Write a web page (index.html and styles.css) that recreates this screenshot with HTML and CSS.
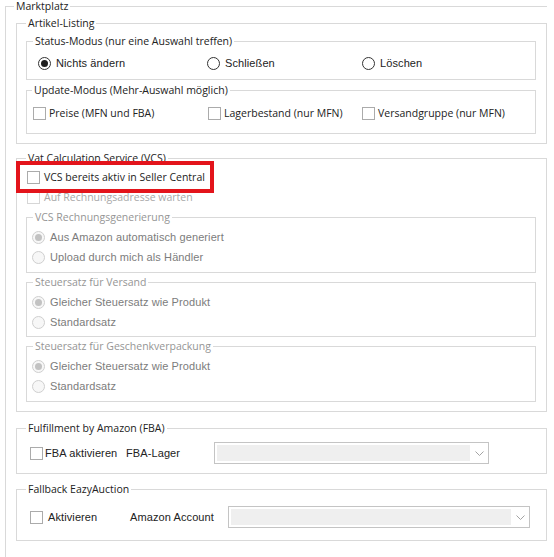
FILE: index.html
```html
<!DOCTYPE html>
<html lang="de">
<head>
<meta charset="utf-8">
<title>Marktplatz</title>
<link rel="stylesheet" href="styles.css">
</head>
<body>
<div class="page">
  <fieldset class="fs outer">
    <legend class="lg lg-outer">Marktplatz</legend>

    <fieldset class="fs group artikel">
      <legend class="lg lg-group">Artikel-Listing</legend>

      <fieldset class="fs sub status">
        <legend class="lg lg-status">Status-Modus (nur eine Auswahl treffen)</legend>
        <div class="opts opts-status">
          <label class="opt"><span class="rb on"></span><span class="tx tahoma">Nichts ändern</span></label>
          <label class="opt"><span class="rb"></span><span class="tx tahoma">Schließen</span></label>
          <label class="opt"><span class="rb"></span><span class="tx tahoma">Löschen</span></label>
        </div>
      </fieldset>

      <fieldset class="fs sub update">
        <legend class="lg lg-update">Update-Modus (Mehr-Auswahl möglich)</legend>
        <div class="opts opts-update">
          <label class="opt"><span class="cb"></span><span class="tx segoe gap3">Preise (MFN und FBA)</span></label>
          <label class="opt"><span class="cb"></span><span class="tx segoe gap3">Lagerbestand (nur MFN)</span></label>
          <label class="opt"><span class="cb"></span><span class="tx segoe gap3">Versandgruppe (nur MFN)</span></label>
        </div>
      </fieldset>
    </fieldset>

    <fieldset class="fs group vcs">
      <legend class="lg lg-group">Vat Calculation Service (VCS)</legend>
      <div class="crow marked">
        <label class="opt"><span class="cb"></span><span class="tx segoe gap4">VCS bereits aktiv in Seller Central</span></label>
        <span class="highlight"></span>
      </div>
      <div class="crow">
        <label class="opt disabled"><span class="cb"></span><span class="tx segoe gap4">Auf Rechnungsadresse warten</span></label>
      </div>

      <fieldset class="fs sub dis rech">
        <legend class="lg lg-dis">VCS Rechnungsgenerierung</legend>
        <div class="rrow"><label class="opt disabled"><span class="rb on"></span><span class="tx tahoma">Aus Amazon automatisch generiert</span></label></div>
        <div class="rrow"><label class="opt disabled"><span class="rb"></span><span class="tx tahoma">Upload durch mich als Händler</span></label></div>
      </fieldset>

      <fieldset class="fs sub dis versand">
        <legend class="lg lg-dis">Steuersatz für Versand</legend>
        <div class="rrow"><label class="opt disabled"><span class="rb on"></span><span class="tx tahoma">Gleicher Steuersatz wie Produkt</span></label></div>
        <div class="rrow"><label class="opt disabled"><span class="rb"></span><span class="tx tahoma">Standardsatz</span></label></div>
      </fieldset>

      <fieldset class="fs sub dis geschenk">
        <legend class="lg lg-dis">Steuersatz für Geschenkverpackung</legend>
        <div class="rrow"><label class="opt disabled"><span class="rb on"></span><span class="tx tahoma">Gleicher Steuersatz wie Produkt</span></label></div>
        <div class="rrow"><label class="opt disabled"><span class="rb"></span><span class="tx tahoma">Standardsatz</span></label></div>
      </fieldset>
    </fieldset>

    <fieldset class="fs group fba">
      <legend class="lg lg-box">Fulfillment by Amazon (FBA)</legend>
      <div class="frow">
        <label class="opt w-fba"><span class="cb"></span><span class="tx tahoma gap2">FBA aktivieren</span></label>
        <span class="tx tahoma w-lager">FBA-Lager</span>
        <div class="combo combo-fba"><span class="combo-fill"></span><span class="combo-arrow"><svg width="9" height="5" viewBox="0 0 9 5"><path d="M0.5 0.5 L4.5 4.5 L8.5 0.5" fill="none" stroke="#a3a3a3" stroke-width="1"/></svg></span></div>
      </div>
    </fieldset>

    <fieldset class="fs group fallback">
      <legend class="lg lg-box">Fallback EazyAuction</legend>
      <div class="frow">
        <label class="opt w-akt"><span class="cb"></span><span class="tx tahoma gap5">Aktivieren</span></label>
        <span class="tx tahoma w-acc">Amazon Account</span>
        <div class="combo combo-acc"><span class="combo-fill"></span><span class="combo-arrow"><svg width="9" height="5" viewBox="0 0 9 5"><path d="M0.5 0.5 L4.5 4.5 L8.5 0.5" fill="none" stroke="#a3a3a3" stroke-width="1"/></svg></span></div>
      </div>
    </fieldset>
  </fieldset>
</div>
</body>
</html>
```

FILE: styles.css
```css
* { box-sizing: border-box; }

html, body {
  margin: 0;
  padding: 0;
  background: #ffffff;
}

.page {
  width: 554px;
  height: 557px;
  overflow: hidden;
  font-family: "Open Sans", "Noto Sans", sans-serif;
  color: #222222;
}

.fs {
  margin: 0;
  border: 1px solid #d9d9d9;
  min-width: 0;
  padding: 0;
}

.lg {
  font-family: "Open Sans", "Noto Sans", sans-serif;
  font-size: 10.5px;
  line-height: 12px;
  height: 12px;
  padding: 0 2px;
  color: #222222;
  white-space: nowrap;
}

/* outer Marktplatz */
.outer {
  margin-left: 5px;
  width: 542px;
  border-right: none;
  border-bottom: none;
  padding: 5px 0 30px 10px;
}
.lg-outer { margin-left: -2px; }

/* group boxes (Artikel, VCS, FBA, Fallback) */
.group {
  width: 531px;
  padding: 6px 10px 9px 9px;
}
.lg-group { margin-left: 0; }

.artikel { padding-bottom: 9px; }

.sub { width: 510px; }

.status { padding: 8px 0 8px 11px; }
.lg-status { margin-left: -5px; }

.update {
  margin-top: 4px;
  padding: 9px 0 12px 6px;
}
.lg-update { margin-left: -1px; }

.opts {
  display: grid;
  height: 16px;
  align-items: center;
}
.opts-status { grid-template-columns: 169px 155px 1fr; }
.opts-update { grid-template-columns: 175px 154px 1fr; }

.opt {
  display: flex;
  align-items: center;
  white-space: nowrap;
}

.tx {
  white-space: nowrap;
  line-height: 14px;
}
.tahoma {
  font-family: "Liberation Sans", Arial, sans-serif;
  font-size: 11px;
  letter-spacing: 0.1px;
  margin-left: 5px;
}
.segoe {
  font-family: "Open Sans", "Noto Sans", sans-serif;
  font-size: 10.5px;
}
.gap2 { margin-left: 2px; }
.gap3 { margin-left: 3px; }
.gap4 { margin-left: 4px; }
.gap5 { margin-left: 5px; }

/* checkbox */
.cb {
  flex: none;
  width: 13px;
  height: 13px;
  border: 1px solid #ababab;
  background: #ffffff;
}

/* radio */
.rb {
  flex: none;
  position: relative;
  width: 13px;
  height: 13px;
  border-radius: 50%;
  border: 1px solid #333333;
  background: #ffffff;
}
.rb.on::after {
  content: "";
  position: absolute;
  left: 2px;
  top: 2px;
  width: 7px;
  height: 7px;
  border-radius: 50%;
  background: #1e1e1e;
}

/* disabled */
.disabled .tx.tahoma { color: #7c7c7c; }
.disabled .tx.segoe { color: #a8a8a8; }
.disabled .cb { border-color: #d6d6d6; }
.disabled .rb {
  border-color: #cfcfcf;
  background: #f7f7f7;
}
.disabled .rb.on::after { background: #c2c2c2; }

/* VCS */
.vcs {
  margin-top: 8px;
  padding: 3px 10px 9px 9px;
}
.crow {
  height: 20px;
  display: flex;
  align-items: center;
  padding-left: 1px;
}
.marked { position: relative; }
.highlight {
  position: absolute;
  left: -10px;
  top: -6px;
  width: 198px;
  height: 32px;
  border: 4px solid #e3141b;
  pointer-events: none;
}

.dis { }
.lg-dis {
  color: #959595;
  margin-left: 1px;
}
.rrow {
  height: 20px;
  display: flex;
  align-items: center;
}
.rech {
  margin-top: 4px;
  padding: 4px 0 5px 5px;
}
.versand {
  margin-top: 3px;
  padding: 4px 0 4px 5px;
}
.geschenk {
  margin-top: 3px;
  padding: 4px 0 5px 5px;
}

/* FBA + Fallback */
.fba {
  margin-top: 10px;
  padding: 8px 0 9px 13px;
}
.fallback {
  margin-top: 9px;
  padding: 11px 0 12px 13px;
}
.lg-box { margin-left: -4px; }

.frow {
  display: flex;
  align-items: center;
  height: 22px;
}
.w-fba { width: 96px; }
.w-lager { width: 88px; margin-left: 0; }
.w-akt { width: 100px; }
.w-acc { width: 98px; margin-left: 0; }

.combo {
  display: flex;
  height: 22px;
  padding: 2px 0 2px 2px;
  border: 1px solid #c4c4c4;
  background: #ffffff;
}
.combo-fba { width: 275px; }
.combo-acc { width: 302px; }
.combo-fill {
  flex: 1;
  background: #efefef;
}
.combo-arrow {
  width: 18px;
  display: flex;
  align-items: center;
  justify-content: center;
}
.combo-arrow svg { display: block; }
```
